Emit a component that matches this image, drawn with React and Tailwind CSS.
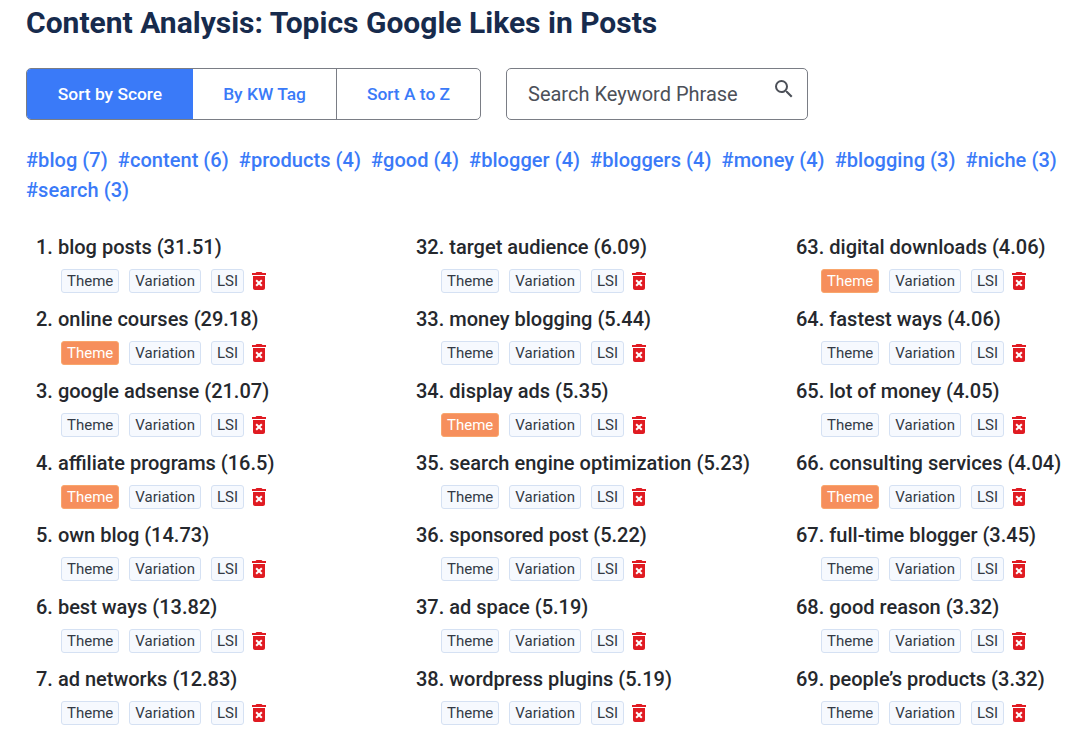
import { MdDeleteForever, MdSearch } from 'react-icons/md';

const hashtags = [
  '#blog (7)', '#content (6)', '#products (4)', '#good (4)', '#blogger (4)',
  '#bloggers (4)', '#money (4)', '#blogging (3)', '#niche (3)', '#search (3)',
];

const columns = [
  [
    ['1. blog posts (31.51)', false],
    ['2. online courses (29.18)', true],
    ['3. google adsense (21.07)', false],
    ['4. affiliate programs (16.5)', true],
    ['5. own blog (14.73)', false],
    ['6. best ways (13.82)', false],
    ['7. ad networks (12.83)', false],
  ],
  [
    ['32. target audience (6.09)', false],
    ['33. money blogging (5.44)', false],
    ['34. display ads (5.35)', true],
    ['35. search engine optimization (5.23)', false],
    ['36. sponsored post (5.22)', false],
    ['37. ad space (5.19)', false],
    ['38. wordpress plugins (5.19)', false],
  ],
  [
    ['63. digital downloads (4.06)', true],
    ['64. fastest ways (4.06)', false],
    ['65. lot of money (4.05)', false],
    ['66. consulting services (4.04)', true],
    ['67. full-time blogger (3.45)', false],
    ['68. good reason (3.32)', false],
    ['69. people’s products (3.32)', false],
  ],
];

function Tag({ children, active }) {
  return (
    <span
      className={
        active
          ? 'flex h-6 items-center rounded-[3px] border border-[#f9a66c] bg-[#f68f5c] px-[5px] text-[15px] text-white'
          : 'flex h-6 items-center rounded-[3px] border border-[#d5e1f3] bg-[#f6f9fe] px-[5px] text-[15px] text-[#333a45]'
      }
    >
      {children}
    </span>
  );
}

function Topic({ label, theme }) {
  return (
    <li className="h-[72px]">
      <div className="h-[30px] text-[20px] leading-[30px] font-medium text-[#25282d]">{label}</div>
      <div className="mt-[7px] ml-[25px] flex items-center">
        <Tag active={theme}>Theme</Tag>
        <div className="ml-[10px]"><Tag>Variation</Tag></div>
        <div className="ml-[10px]"><Tag>LSI</Tag></div>
        <MdDeleteForever className="ml-[3px] text-[#e01b22]" size={24} />
      </div>
    </li>
  );
}

export default function App() {
  return (
    <div className="h-[737px] overflow-hidden bg-white pl-[26px] font-['Roboto',sans-serif]">
      <h1 className="pt-[4px] text-[30px] leading-[38px] font-bold text-[#172b4d]">
        Content Analysis: Topics Google Likes in Posts
      </h1>

      <div className="mt-[26px] flex items-center">
        <div className="flex h-[52px] w-[455px] overflow-hidden rounded-[5px] border border-[#7a7d85] text-[17.4px] font-medium">
          <button className="w-[166px] bg-[#3a7af8] text-white">Sort by Score</button>
          <button className="w-[144px] border-r border-[#7a7d85] text-[#3a7af8]">By KW Tag</button>
          <button className="flex-1 text-[#3a7af8]">Sort A to Z</button>
        </div>
        <div className="relative ml-[25px] flex h-[52px] w-[302px] items-center rounded-[5px] border border-[#7a7d85] pl-[21px] text-[20px] text-[#4c5058]">
          Search Keyword Phrase
          <MdSearch className="absolute top-[8px] right-[11px] text-[#4c5058]" size={24} />
        </div>
      </div>

      <div className="mt-[25px] flex w-[1040px] flex-wrap gap-x-[10px] text-[20px] leading-[30px] font-medium tracking-[0.05px] text-[#3a7af8]">
        {hashtags.map((tag) => (
          <span key={tag}>{tag}</span>
        ))}
      </div>

      <div className="mt-[27px] grid grid-cols-[380px_380px_1fr] pl-[10px]">
        {columns.map((items, i) => (
          <ul key={i}>
            {items.map(([label, theme]) => (
              <Topic key={label} label={label} theme={theme} />
            ))}
          </ul>
        ))}
      </div>
    </div>
  );
}
